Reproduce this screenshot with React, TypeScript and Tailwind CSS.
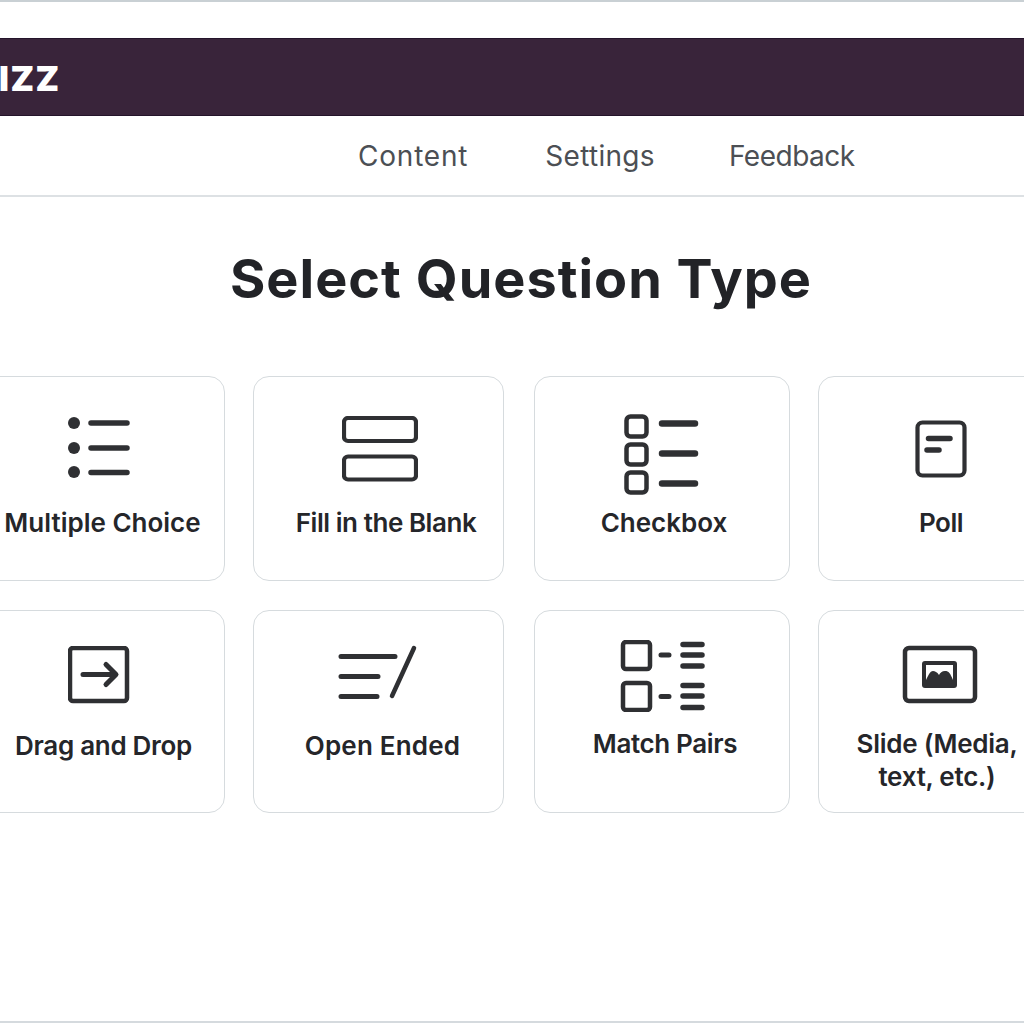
import React from "react";

const c = "#2f3033";

function Card({ icon, label, lift, offset, shift = "" }: { icon: React.ReactNode; label: React.ReactNode; lift: string; offset: string; shift?: string }) {
  return (
    <div className={`flex flex-col items-center rounded-2xl border border-[#d6dbde] bg-white ${shift}`}>
      <div className={`flex w-full justify-center ${lift}`}>{icon}</div>
      <div className={`text-center text-[26px] font-semibold leading-[33px] text-[#25262a] ${offset}`}>{label}</div>
    </div>
  );
}

const IconList = (
  <svg width="62" height="62" viewBox="68 417 62 62" className="mt-[40px] mr-[2px]" fill={c} stroke={c} strokeLinecap="round">
    <circle cx="74" cy="423" r="6" stroke="none" />
    <circle cx="74" cy="448" r="6" stroke="none" />
    <circle cx="74" cy="472" r="6" stroke="none" />
    <path d="M91 423H127M91 448H127M91 472.500H127" strokeWidth="5.500" fill="none" />
  </svg>
);
const IconBlank = (
  <svg width="76" height="66" viewBox="342 416 76 66" className="mt-[39px] ml-[2px]" fill="none" stroke={c} strokeWidth="4.200">
    <rect x="344" y="418" width="72" height="23" rx="4" />
    <rect x="344" y="456.500" width="72" height="23" rx="4" />
  </svg>
);
const IconCheck = (
  <svg width="76" height="82" viewBox="625 414 76 82" className="mt-[37px]" fill="none" stroke={c} strokeLinecap="round">
    <rect x="627.500" y="416.500" width="20" height="20" rx="4" strokeWidth="4.500" />
    <rect x="627.500" y="444.500" width="20" height="20" rx="4" strokeWidth="4.500" />
    <rect x="627.500" y="472.500" width="20" height="20" rx="4" strokeWidth="4.500" />
    <path d="M663 423.500H696M663 453.500H696M663 483.500H696" strokeWidth="6.500" />
  </svg>
);
const IconPoll = (
  <svg width="52" height="58" viewBox="915 420 52 58" className="mt-[43px]" fill="none" stroke={c} strokeLinecap="round">
    <rect x="917.500" y="422.500" width="47" height="53" rx="5" strokeWidth="4.200" />
    <path d="M928.500 438.500H950M927 450H939" strokeWidth="5.500" />
  </svg>
);
const IconDrag = (
  <svg width="62" height="58" viewBox="68 647 62 58" className="mt-[35px] mr-[2px]" fill="none" stroke={c} strokeLinecap="round" strokeLinejoin="round">
    <rect x="70" y="649" width="57" height="53" rx="3" strokeWidth="4.500" />
    <path d="M83 675.500H115M106 665.500L116 675.500L106 685.500" strokeWidth="5" />
  </svg>
);
const IconOpen = (
  <svg width="80" height="56" viewBox="338 646 80 56" className="mt-[34px] ml-[-2px]" fill="none" stroke={c} strokeLinecap="round">
    <path d="M341 657.500H395M341 677.500H378M341 697.500H377" strokeWidth="5" />
    <path d="M392 697L414 649" strokeWidth="4.500" />
  </svg>
);
const IconMatch = (
  <svg width="86" height="72" viewBox="620 641 86 72" className="mt-[29px] ml-[2px]" fill="none" stroke={c} strokeLinecap="round">
    <rect x="623" y="643" width="27" height="27" rx="3" strokeWidth="4.500" />
    <rect x="623" y="684" width="27" height="27" rx="3" strokeWidth="4.500" />
    <path d="M661 656H669M661 697.500H669" strokeWidth="5" />
    <path d="M683 645.500H702M683 656H702M683 667H702M683 686.500H702M683 697H702M683 708.500H702" strokeWidth="5.500" />
  </svg>
);
const IconSlide = (
  <svg width="76" height="60" viewBox="903 645 76 60" className="mt-[34px] mr-[2px]" fill="none" stroke={c}>
    <rect x="906" y="648" width="70" height="53" rx="4" strokeWidth="4.500" />
    <rect x="923" y="661" width="35" height="27" rx="3" fill={c} stroke="none" />
    <path d="M927 665H954V680C951 673 950 671 946 671C943 671 941 673 940 675C938 672 936 671 934 671C931 671 929 676 927 680Z" fill="#fff" stroke="none" />
  </svg>
);

export default function App() {
  return (
    <div className="flex h-[1024px] w-[1024px] flex-col overflow-hidden bg-white font-['Inter','Liberation_Sans',sans-serif]">
      <div className="h-[2px] bg-[#c9d0d4]" />
      <header className="mt-[36px] flex h-[78px] items-center overflow-hidden border-y border-[#24142a] bg-[#39243a] pt-[2px]">
        <span className="ml-[-1px] text-[34px] font-black tracking-[1.5px] text-white">IZZ</span>
      </header>
      <nav className="flex h-[81px] items-center border-b-[2px] border-[#dde1e4] pl-[358px] text-[28px] leading-none text-[#4c4f54]">
        <span className="tracking-[0.8px]">Content</span>
        <span className="ml-[77px] tracking-[0.3px]">Settings</span>
        <span className="ml-[74px] tracking-[-0.5px]">Feedback</span>
      </nav>
      <h1 className="ml-[18px] mt-[50px] text-center text-[54px] font-bold leading-[64px] tracking-[1px] text-[#222327]">Select Question Type</h1>
      <main className="ml-[-26px] mt-[65px] grid w-[1090px] grid-cols-[251px_251px_256px_246px] grid-rows-[205px_203px] gap-x-[29px] gap-y-[29px]">
        <Card lift="h-[129px]" offset="ml-[6px]" icon={IconList} label="Multiple Choice" />
        <Card lift="h-[129px]" offset="ml-[15px] tracking-[-0.45px]" shift="-translate-x-px" icon={IconBlank} label="Fill in the Blank" />
        <Card lift="h-[129px]" offset="ml-[4px]" icon={IconCheck} label="Checkbox" />
        <Card lift="h-[129px]" offset="tracking-[-0.5px]" shift="-translate-x-px" icon={IconPoll} label="Poll" />
        <Card lift="h-[118px]" offset="ml-[8px] tracking-[-0.3px]" icon={IconDrag} label="Drag and Drop" />
        <Card lift="h-[118px]" offset="ml-[8px] tracking-[0.2px]" shift="-translate-x-px" icon={IconOpen} label="Open Ended" />
        <Card lift="h-[116px]" offset="ml-[6px] tracking-[-0.35px]" icon={IconMatch} label="Match Pairs" />
        <Card lift="h-[116px]" offset="ml-[-8px] tracking-[-0.25px]" shift="-translate-x-px" icon={IconSlide} label={<>Slide (Media,<br />text, etc.)</>} />
      </main>
      <div className="mt-auto mb-[1px] h-[2px] bg-[#d5dade]" />
    </div>
  );
}
